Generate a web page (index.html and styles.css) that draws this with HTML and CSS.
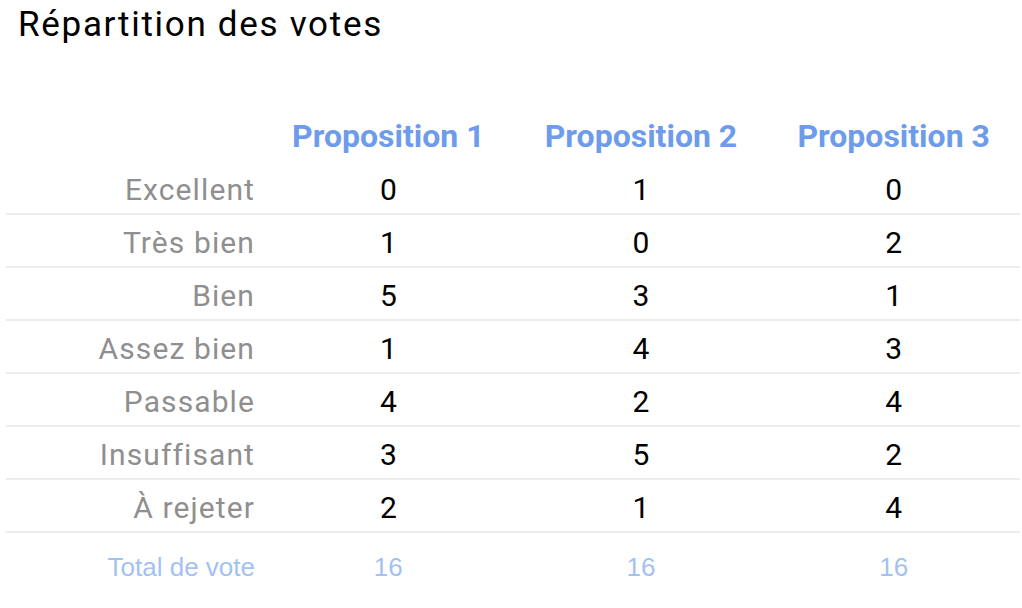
FILE: index.html
```html
<!DOCTYPE html>
<html lang="fr">
<head>
<meta charset="utf-8">
<link rel="stylesheet" href="styles.css">
<title>Répartition des votes</title>
</head>
<body>
<h1 class="title">Répartition des votes</h1>
<table class="votes">
  <thead>
    <tr>
      <th class="label"></th>
      <th class="prop">Proposition 1</th>
      <th class="prop">Proposition 2</th>
      <th class="prop">Proposition 3</th>
    </tr>
  </thead>
  <tbody>
    <tr><td class="label">Excellent</td><td>0</td><td>1</td><td>0</td></tr>
    <tr><td class="label">Très bien</td><td>1</td><td>0</td><td>2</td></tr>
    <tr><td class="label">Bien</td><td>5</td><td>3</td><td>1</td></tr>
    <tr><td class="label">Assez bien</td><td>1</td><td>4</td><td>3</td></tr>
    <tr><td class="label">Passable</td><td>4</td><td>2</td><td>4</td></tr>
    <tr><td class="label">Insuffisant</td><td>3</td><td>5</td><td>2</td></tr>
    <tr><td class="label">À rejeter</td><td>2</td><td>1</td><td>4</td></tr>
  </tbody>
  <tfoot>
    <tr class="total"><td class="label">Total de vote</td><td>16</td><td>16</td><td>16</td></tr>
  </tfoot>
</table>
</body>
</html>
```
FILE: styles.css
```css
html, body {
  margin: 0;
  padding: 0;
  background: #ffffff;
}
body {
  font-family: Roboto, "Liberation Sans", sans-serif;
  color: #000;
  padding: 0 2px 0 6px;
}
.title {
  margin: 0;
  padding: 5px 0 0 12px;
  font-size: 35px;
  font-weight: 400;
  letter-spacing: 1.7px;
  line-height: 40px;
}
.votes {
  margin-top: 65px;
  width: 1014px;
  border-collapse: collapse;
  table-layout: fixed;
}
.votes th, .votes td {
  padding: 0;
  text-align: center;
}
.votes th.label, .votes td.label {
  width: 249px;
  text-align: right;
  padding-right: 7px;
}
.votes thead th {
  height: 52px;
  font-size: 32px;
  font-weight: 700;
  color: #6e9ceb;
}
.votes tbody td {
  height: 48px;
  padding-top: 3px;
  font-size: 30px;
  border-bottom: 2px solid #ececec;
}
.votes tbody td.label {
  color: #8f8f8f;
  font-size: 30px;
  letter-spacing: 1.1px;
}
.votes .total td {
  height: 68px;
  font-family: "Liberation Sans", Arial, sans-serif;
  font-size: 26px;
  color: #a3c1f2;
}
```
